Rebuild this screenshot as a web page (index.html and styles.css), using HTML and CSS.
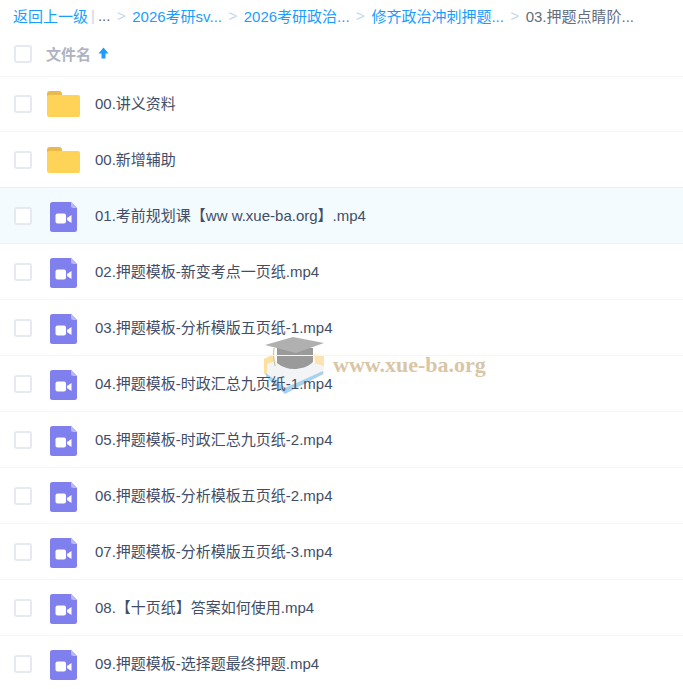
FILE: index.html
```html
<!DOCTYPE html>
<html lang="zh-CN">
<head>
    <meta charset="UTF-8">
    <title>文件列表</title>
    <link rel="stylesheet" href="styles.css">
</head>
<body>
    <svg class="icon-defs" width="0" height="0">
        <symbol id="icon-folder" viewBox="0 0 33 26">
            <path d="M0 3a3 3 0 0 1 3-3h9a3 3 0 0 1 3 3v2H0z" fill="#e9b94a"/>
            <rect x="0" y="4" width="33" height="22" rx="2" fill="#ffd258"/>
        </symbol>
        <symbol id="icon-video" viewBox="0 0 27 30">
            <path d="M2.500 0H21l6 6v21.500a2.500 2.500 0 0 1-2.500 2.500h-22A2.500 2.500 0 0 1 0 27.500v-25A2.500 2.500 0 0 1 2.500 0z" fill="#7f7fee"/>
            <path d="M21 0l6 6h-4a2 2 0 0 1-2-2z" fill="#b9b8f6"/>
            <rect x="5.500" y="11.500" width="10.500" height="10" rx="2" fill="#fff"/>
            <path d="M17 16l4.500-3v8l-4.500-3z" fill="#fff"/>
        </symbol>
    </svg>

    <div class="file-page">
        <!-- 面包屑 -->
        <nav class="crumbs">
            <a class="crumb-link">返回上一级</a>
            <span class="crumb-bar">|</span>
            <span class="crumb-more">...</span>
            <span class="crumb-sep">&gt;</span>
            <a class="crumb-link">2026考研sv...</a>
            <span class="crumb-sep">&gt;</span>
            <a class="crumb-link">2026考研政治...</a>
            <span class="crumb-sep">&gt;</span>
            <a class="crumb-link">修齐政治冲刺押题...</a>
            <span class="crumb-sep">&gt;</span>
            <span class="crumb-current">03.押题点睛阶...</span>
        </nav>

        <div class="list-head">
            <span class="check"></span>
            <span class="head-name">文件名</span>
            <svg class="sort-arrow" width="11" height="12" viewBox="0 0 11 12">
                <path d="M5.500 .5L10.500 6.500H7.500V11.500H3.500V6.500H.5z" fill="#1a9dff"/>
            </svg>
        </div>

        <ul class="file-list">
            <li class="file-row">
                <span class="check"></span>
                <svg class="file-icon folder"><use href="#icon-folder"/></svg>
                <span class="file-name">00.讲义资料</span>
            </li>
            <li class="file-row">
                <span class="check"></span>
                <svg class="file-icon folder"><use href="#icon-folder"/></svg>
                <span class="file-name">00.新增辅助</span>
            </li>
            <li class="file-row hover">
                <span class="check"></span>
                <svg class="file-icon video"><use href="#icon-video"/></svg>
                <span class="file-name">01.考前规划课【ww w.xue-ba.org】.mp4</span>
            </li>
            <li class="file-row">
                <span class="check"></span>
                <svg class="file-icon video"><use href="#icon-video"/></svg>
                <span class="file-name">02.押题模板-新变考点一页纸.mp4</span>
            </li>
            <li class="file-row">
                <span class="check"></span>
                <svg class="file-icon video"><use href="#icon-video"/></svg>
                <span class="file-name">03.押题模板-分析模版五页纸-1.mp4</span>
            </li>
            <li class="file-row">
                <span class="check"></span>
                <svg class="file-icon video"><use href="#icon-video"/></svg>
                <span class="file-name">04.押题模板-时政汇总九页纸-1.mp4</span>
            </li>
            <li class="file-row">
                <span class="check"></span>
                <svg class="file-icon video"><use href="#icon-video"/></svg>
                <span class="file-name">05.押题模板-时政汇总九页纸-2.mp4</span>
            </li>
            <li class="file-row">
                <span class="check"></span>
                <svg class="file-icon video"><use href="#icon-video"/></svg>
                <span class="file-name">06.押题模板-分析模板五页纸-2.mp4</span>
            </li>
            <li class="file-row">
                <span class="check"></span>
                <svg class="file-icon video"><use href="#icon-video"/></svg>
                <span class="file-name">07.押题模板-分析模版五页纸-3.mp4</span>
            </li>
            <li class="file-row">
                <span class="check"></span>
                <svg class="file-icon video"><use href="#icon-video"/></svg>
                <span class="file-name">08.【十页纸】答案如何使用.mp4</span>
            </li>
            <li class="file-row">
                <span class="check"></span>
                <svg class="file-icon video"><use href="#icon-video"/></svg>
                <span class="file-name">09.押题模板-选择题最终押题.mp4</span>
            </li>
        </ul>

        <!-- 水印 -->
        <div class="watermark">
            <svg class="wm-logo" width="60" height="60" viewBox="0 0 60 60">
                <path d="M0 23L10 18V44L0 38z" fill="#fde0a0"/>
                <path d="M50 18L60 20V38L52 42z" fill="#fbe3b4"/>
                <path d="M3 28L24 20 60 30V37L22 55 3 38z" fill="#f2f4f6"/>
                <path d="M2 37L21 52 59 35V38L21 58 2 41z" fill="#a6d2f0"/>
                <path d="M13 12H49V26C44 31 36 33 30 33 24 33 18 31 13 27z" fill="#9a9a9a"/>
                <path d="M1 9L29 1 60 7 32 17z" fill="#b0b0b0"/>
                <path d="M10 12C9 18 10 24 11 30" stroke="#cbb98f" stroke-width="1" fill="none"/>
            </svg>
            <span class="wm-text">www.xue-ba.org</span>
        </div>
    </div>
</body>
</html>
```

FILE: styles.css
```css
* {
    box-sizing: border-box;
}

body {
    margin: 0;
    font-family: "Liberation Sans", "Noto Sans CJK SC", sans-serif;
    background-color: #fff;
    overflow: hidden;
}

.icon-defs {
    position: absolute;
}

.file-page {
    position: relative;
    height: 689px;
    overflow: hidden;
}

/* 面包屑 */
.crumbs {
    display: flex;
    align-items: center;
    height: 30px;
    padding-left: 13px;
    font-size: 15px;
    white-space: nowrap;
}

.crumb-link {
    color: #1a9dff;
}

.crumb-bar {
    margin-left: 3px;
    color: #c9d6e8;
}

.crumb-more {
    margin-left: 3px;
    color: #666;
}

.crumb-sep {
    margin: 0 6.500px;
    color: #c4d5ec;
}

.crumb-current {
    color: #636d7e;
}

/* 表头 */
.list-head {
    display: flex;
    align-items: center;
    height: 47px;
    padding-left: 14px;
    border-bottom: 1px solid #f4f5fb;
}

.head-name {
    margin-left: 14px;
    font-size: 15px;
    font-weight: bold;
    color: #afb3bf;
}

.sort-arrow {
    margin-left: 7px;
}

.check {
    flex: none;
    width: 18px;
    height: 18px;
    margin-top: 2px;
    border: 2px solid #e6e9ef;
    border-radius: 3px;
    background-color: #fff;
}

/* 文件列表 */
.file-list {
    position: relative;
    z-index: 1;
    list-style: none;
    margin: -1px 0 0;
    padding: 0;
}

.file-row {
    display: flex;
    align-items: center;
    height: 56px;
    padding: 0 0 2px 14px;
    border-bottom: 1px solid #f4f5fb;
}

.file-row.hover {
    background-color: #f4fbff;
    border-bottom-color: #e3f2fd;
    box-shadow: 0 -1px 0 #e3f2fd;
}

.file-icon {
    flex: none;
}

.folder {
    width: 33px;
    height: 26px;
    margin: 3px 0 0 15px;
}

.video {
    width: 27px;
    height: 30px;
    margin: 5px 3px 0 18px;
}

.file-name {
    margin-left: 15px;
    font-size: 15px;
    color: #424e67;
    white-space: nowrap;
}

/* 水印 */
.watermark {
    position: absolute;
    left: 264px;
    top: 336px;
    display: flex;
    align-items: center;
    pointer-events: none;
}

.wm-text {
    margin: 0 0 2px 9px;
    font-family: "Liberation Serif", serif;
    font-size: 22px;
    font-weight: bold;
    color: #d9c6a6;
}
```
